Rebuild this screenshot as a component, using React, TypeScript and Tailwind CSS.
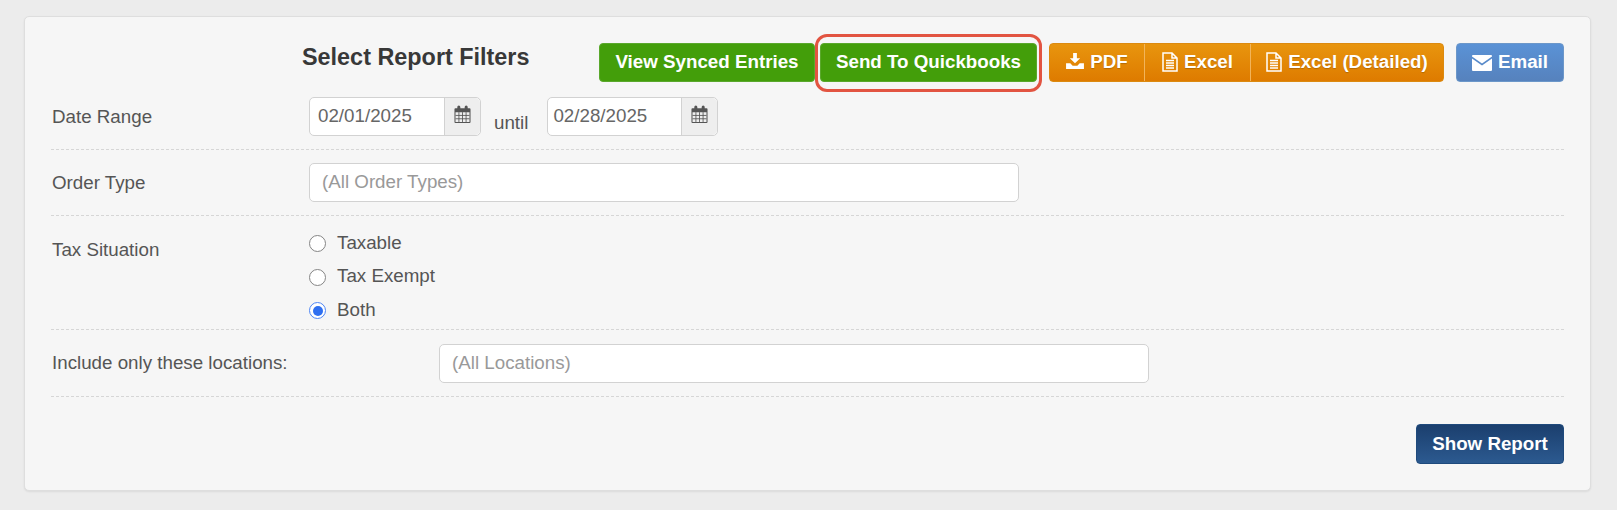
import React from 'react';

const CalendarIcon = () => (
    <svg width="17" height="19" viewBox="0 0 18 20" className="-mt-[5px] text-[#555]">
        <path fill="currentColor" d="M1.5 3.5h2V2a1.6 1.6 0 0 1 3.2 0v1.5h4.6V2a1.6 1.6 0 0 1 3.2 0v1.5h2A1 1 0 0 1 17.5 4.5v13.5a1 1 0 0 1-1 1h-15a1 1 0 0 1-1-1V4.5a1 1 0 0 1 1-1zM1.6 7.5v10.4h14.8V7.5z" />
        <path stroke="currentColor" strokeWidth="0.9" d="M5.2 7.5v10.4M9 7.5v10.4M12.8 7.5v10.4M1.6 11h14.8M1.6 14.5h14.8" />
    </svg>
);

const DownloadIcon = () => (
    <svg width="18" height="16" viewBox="0 0 19 17" className="-mt-[3px] text-white">
        <path fill="currentColor" d="M7.5 0h4v5.5h3.5L9.5 11 4 5.5h3.5zM0 11h4.5l2.5 2.5h5L14.5 11H19v6H0z" />
    </svg>
);

const FileIcon = () => (
    <svg width="16" height="20" viewBox="0 0 16 20" className="-mt-[2px] text-white">
        <path fill="none" stroke="currentColor" strokeWidth="1.5" d="M1 1h9L15 6v13H1zM10 1v5h5" />
        <path stroke="currentColor" strokeWidth="1.3" d="M4 8.5h8M4 11h8M4 13.5h8M4 16h8" />
    </svg>
);

const MailIcon = () => (
    <svg width="20" height="16" viewBox="0 0 20 16" className="text-white">
        <path fill="currentColor" d="M1 0h18a1 1 0 0 1 1 1v.4l-10 7-10-7V1a1 1 0 0 1 1-1zM0 3.4l10 7 10-7V15a1 1 0 0 1-1 1H1a1 1 0 0 1-1-1z" />
    </svg>
);

const DateInput = ({ value, className }: { value: string; className: string }) => (
    <div className={`flex h-[39px] rounded-[5px] border border-[#d2d2d2] bg-white ${className}`}>
        <div className="flex-1 leading-[36px] text-[#666]">{value}</div>
        <div className="flex w-[36px] items-center justify-center rounded-r-[5px] border-l border-[#d2d2d2] bg-[#eeeeee]">
            <CalendarIcon />
        </div>
    </div>
);

const Radio = ({ label, checked }: { label: string; checked?: boolean }) => (
    <label className="flex h-[33.5px] items-center gap-[11px]">
        <span className={`flex h-[17px] w-[17px] items-center justify-center rounded-full bg-white ${checked ? 'border-[1.5px] border-[#4f86f5]' : 'border-[1.5px] border-[#858585]'}`}>
            {checked && <span className="h-[10px] w-[10px] rounded-full bg-[#2f6ff0]" />}
        </span>
        <span className="-mt-[2px]">{label}</span>
    </label>
);

const greenBtn = 'flex h-[39px] items-center rounded-[4px] border border-[#5aa82c] bg-[#439e0a] font-bold text-white';

export default function App() {
    return (
        <div className="h-[510px] bg-[#ececec] pt-4 pl-6 font-['Liberation_Sans',Arial,sans-serif] text-[18.75px] text-[#555]">
            <div className="h-[475px] w-[1567px] rounded-[5px] border border-[#dedede] bg-[#f6f6f6] px-[26px] shadow-[0_1px_2px_rgba(0,0,0,0.08)]">
                {/* Header */}
                <div className="flex h-[80px] pt-[26px]">
                    <h3 className="ml-[251px] w-[297px] text-[23.4px] leading-[28px] font-bold text-[#383838]">Select Report Filters</h3>
                    <div className={`${greenBtn} w-[216px] justify-center`}>View Synced Entries</div>
                    <div className="relative ml-[5px] self-start">
                        <div className={`${greenBtn} w-[217px] justify-center`}>Send To Quickbooks</div>
                        <div className="absolute -top-[9px] -right-[5px] -bottom-[10px] -left-[5px] rounded-[12px] border-[3px] border-[#e25441]" />
                    </div>
                    <div className="ml-[12px] flex h-[39px] w-[395px] rounded-[4px] border border-[#dc8a10] bg-gradient-to-b from-[#e8950e] to-[#de7b00] font-bold text-white [text-shadow:0_1px_1px_rgba(0,0,0,0.2)]">
                        <div className="flex w-[95px] items-center justify-center gap-[6px] border-r border-[#f2b45a]"><DownloadIcon />PDF</div>
                        <div className="flex w-[106px] items-center justify-center gap-[6px] border-r border-[#f2b45a]"><FileIcon />Excel</div>
                        <div className="flex flex-1 items-center justify-center gap-[6px]"><FileIcon />Excel (Detailed)</div>
                    </div>
                    <div className="ml-[12px] flex h-[39px] w-[108px] items-center justify-center gap-1.5 rounded-[4px] border border-[#6c97c9] bg-gradient-to-b from-[#5a92d6] to-[#5682bd] font-bold text-white">
                        <MailIcon />Email
                    </div>
                </div>

                {/* Date range */}
                <div className="flex h-[53px] border-b border-dashed border-[#d6d6d6]">
                    <div className="w-[258px] pt-[6px] pl-px">Date Range</div>
                    <DateInput value="02/01/2025" className="w-[172px] pl-[8px]" />
                    <div className="mr-[19px] ml-[13px] pt-[12px]">until</div>
                    <DateInput value="02/28/2025" className="w-[171px] pl-[5px]" />
                </div>

                {/* Order type */}
                <div className="flex h-[66px] border-b border-dashed border-[#d6d6d6] pt-[13px]">
                    <div className="w-[258px] pt-[6px] pl-px">Order Type</div>
                    <div className="h-[39px] w-[710px] rounded-[5px] border border-[#d2d2d2] bg-white pl-3 leading-[36px] text-[#999]">(All Order Types)</div>
                </div>

                {/* Tax */}
                <div className="flex h-[114px] border-b border-dashed border-[#d6d6d6] pt-[11px]">
                    <div className="w-[258px] pt-[9px] pl-px">Tax Situation</div>
                    <div className="flex flex-col">
                        <Radio label="Taxable" />
                        <Radio label="Tax Exempt" />
                        <Radio label="Both" checked />
                    </div>
                </div>

                {/* Locations */}
                <div className="flex h-[67px] border-b border-dashed border-[#d6d6d6] pt-[14px]">
                    <div className="w-[388px] pt-[5px] pl-px">Include only these locations:</div>
                    <div className="h-[39px] w-[710px] rounded-[5px] border border-[#d2d2d2] bg-white pl-3 leading-[36px] text-[#999]">(All Locations)</div>
                </div>

                <div className="flex justify-end pt-[27px]">
                    <div className="flex h-[40px] w-[148px] items-center justify-center rounded-[4px] border border-[#1f4a7c] bg-gradient-to-b from-[#1b3f6e] to-[#2c5a90] font-bold text-white">Show Report</div>
                </div>
            </div>
        </div>
    );
}
